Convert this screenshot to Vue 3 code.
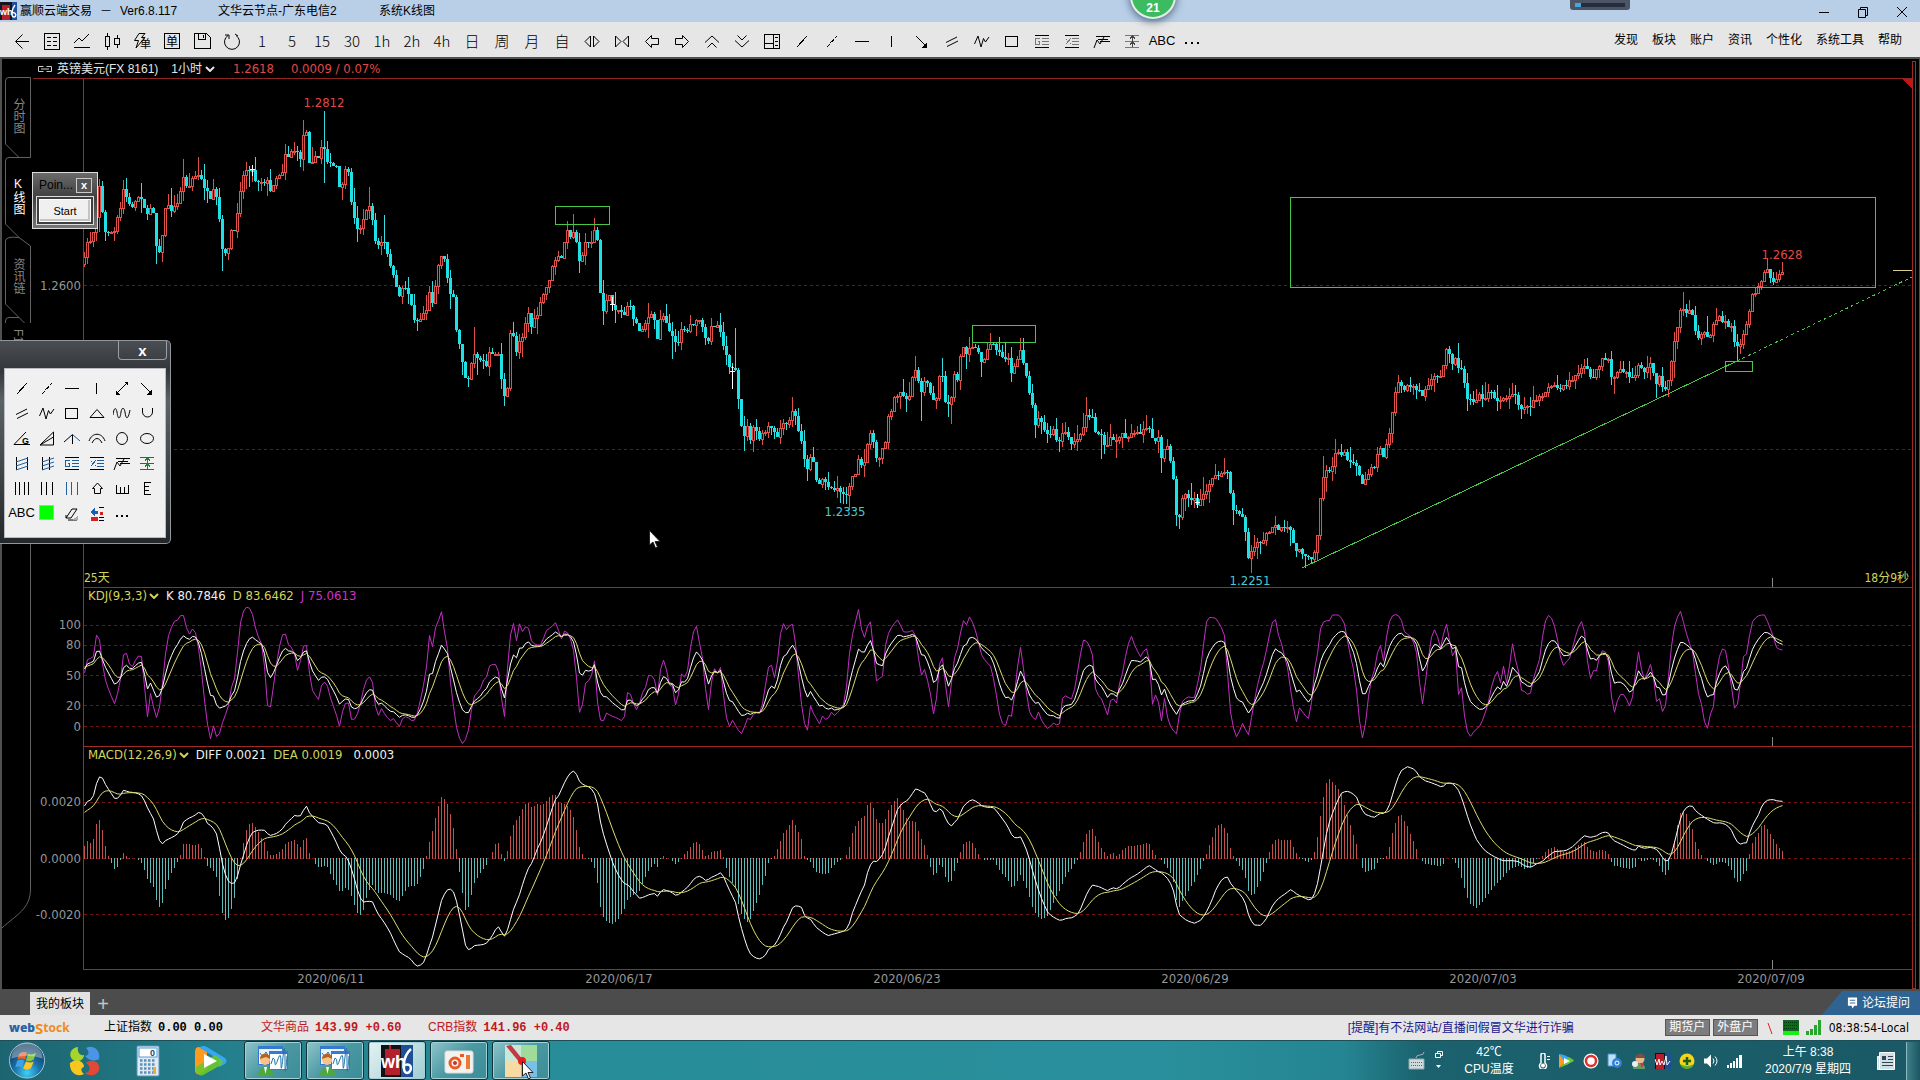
<script setup>
// ---------- sample data ----------
// Samples sit on a grid of 2.45 units per pixel column and 3 per pixel row.
const STEP = 3
const FIRST = 84.5
const COUNT = 567

function unpack(originX, originY, text, perX = 2.45) {
  return text.trim().split(/\s+/).map((pair) => {
    const [x, y] = pair.split(',').map(Number)
    return [originX + x / perX, originY + y / 3]
  })
}

function resample(points) {
  const out = []
  let k = 0
  for (let i = 0; i < COUNT; i++) {
    const x = FIRST + i * STEP
    while (k < points.length - 2 && points[k + 1][0] < x) k++
    const [x0, y0] = points[k]
    const [x1, y1] = points[k + 1]
    const t = Math.min(1, Math.max(0, (x - x0) / (x1 - x0 || 1)))
    out.push(y0 + (y1 - y0) * t)
  }
  return out
}

const priceTrack = [
  ...unpack(0, 80, `207,540 213,535 215,465 222,480 230,450 237,400 243,305 248,370 258,460 266,455 280,458 290,405 297,380 303,325 318,378 330,372 335,350 350,348 357,400 365,418 370,368 378,400 385,522 392,505 400,460 405,380 425,388 435,370 442,330 448,290 457,312 468,318 473,288 487,288 497,310 505,328 515,368 525,330 535,380 545,515 560,510 568,445 578,470 583,370 590,320 600,270 612,262 618,270 625,300 640,303 655,302 660,348 672,300 690,272 697,262 700,208 708,230 715,210 725,212 735,240 740,210 745,148 753,150 758,240 770,238 780,235 788,198 797,205 803,240 810,258 825,262 833,340 845,275 858,290 863,400 875,440 885,442 890,425 897,385 903,378 912,408 920,485 930,500 940,480 950,530 960,560 968,620 980,645 988,620 996,620 1003,650 1010,690 1018,725 1030,715 1045,685 1055,625 1062,680 1070,570 1080,535 1085,500 1092,570 1100,610 1105,645 1113,650 1118,755 1127,805 1135,855 1143,905 1150,880 1160,810 1168,830 1182,840 1192,860 1200,818 1208,830 1216,810 1225,830 1230,915 1237,958 1243,940 1250,760 1260,765 1268,840 1275,745 1283,780 1290,695 1297,700 1305,758 1312,705 1320,700 1327,655 1340,620 1350,580 1357,550 1365,525 1370,540 1380,535 1385,450 1397,465 1410,455 1415,500 1423,560 1432,500 1438,470 1447,495 1455,452 1463,455 1467,565 1474,695 1482,690 1488,635 1495,660 1505,680 1520,695 1530,700 1540,665 1548,700 1560,735`),
  ...unpack(600, 180, `97,450 103,440 113,425 122,405 135,420 141,480 150,392 158,410 168,440 178,470 187,500 197,462 202,425 212,470 220,425 235,433 243,415 250,445 260,485 268,488 273,432 287,435 297,450 303,500 313,525 320,575 330,565 335,600 341,690 347,745 355,765 362,740 370,780 378,740 390,775 400,765 415,740 425,755 432,780 442,745 455,730 462,745 468,690 475,690 485,750 492,780 498,770 502,850 510,880 518,800 525,860 532,910 540,912 548,888 557,925 567,915 577,935 585,918 595,945 605,943 612,905 622,890 635,840 645,868 652,840 658,760 665,745 672,805 680,860 690,800 698,795 703,735 708,695 716,698 722,650 735,632 745,655 758,645 765,600 773,565 780,600 788,630 796,598 805,625 815,645 820,695 828,632 833,570 840,600 848,690 858,670 862,640 870,570 877,605 885,510 893,492 900,525 907,485 915,500 925,515 935,540 945,525 955,495 965,488 972,505 982,530 995,535 1003,530 1009,590 1020,550 1030,510 1036,510 1040,595 1047,575 1053,645 1060,680 1068,735 1078,690 1085,745 1097,765 1113,752 1120,785 1127,785 1135,750 1143,770 1155,790 1165,775 1178,768 1183,740 1190,705 1200,710 1210,708 1215,770 1225,755 1232,790 1243,802 1252,762 1262,790 1270,780 1277,745 1287,775 1300,758 1315,762 1325,765 1335,745 1350,740 1357,795 1367,770 1377,840 1388,780 1396,840 1403,880 1409,915 1413,1020 1420,1005 1430,935 1440,955 1452,960 1463,970 1475,955 1487,925 1500,890 1515,890 1527,870 1535,862 1542,910 1547,980 1560,990`),
  ...unpack(1240, 180, `0,1012 8,1005 13,1055 20,1140 27,1115 37,1095 47,1090 58,1070 68,1055 77,1030 88,1055 100,1045 112,1050 120,1055 128,1122 138,1098 150,1135 162,1140 172,1110 180,1052 187,920 195,880 203,860 210,880 218,830 228,815 240,818 250,850 262,840 270,855 278,900 287,912 295,880 303,858 310,860 317,820 325,795 333,838 340,775 348,745 353,670 360,625 370,608 380,632 388,618 400,622 412,620 416,650 425,640 437,605 450,595 465,590 470,550 477,505 485,515 492,555 500,520 507,590 515,550 520,650 535,660 550,650 565,648 578,640 590,655 610,658 625,648 632,620 638,660 650,680 660,685 675,670 685,650 700,640 715,620 740,628 755,615 765,600 780,575 797,555 807,600 820,575 833,540 850,545 858,610 868,580 882,572 900,592 915,585 921,535 930,580 940,565 948,550 960,605 970,590 976,640 985,620 992,570 997,520 1003,470 1010,430 1017,375 1027,410 1040,395 1047,430 1052,470 1062,468 1070,455 1082,465 1090,440 1100,415 1115,420 1128,435 1137,450 1143,500 1153,500 1160,470 1165,420 1172,455 1177,345 1183,330 1190,340 1197,310 1205,290 1212,262 1220,280 1228,300 1238,300 1245,285 1252,270`, 2.306),
]

const jTrack = [
  ...unpack(0, 570, `205,322 213,270 222,265 230,258 237,190 244,210 252,290 260,340 270,370 280,403 293,350 303,250 310,250 315,280 325,290 335,262 346,252 352,320 361,445 368,367 376,410 384,445 395,390 402,280 412,200 425,155 436,150 443,135 450,137 456,170 463,195 471,176 480,190 490,260 500,380 508,460 516,508 523,467 530,500 538,490 548,445 558,420 568,345 577,320 583,230 590,150 598,118 605,110 612,115 618,130 625,170 633,200 642,225 650,310 656,418 663,410 672,330 680,260 690,195 700,192 707,225 720,240 729,302 735,280 742,232 750,215 757,300 765,360 780,390 788,345 796,335 803,350 812,395 822,425 832,470 840,420 848,395 855,400 861,448 870,447 880,420 890,360 898,330 905,320 912,330 918,400 926,440 935,415 945,438 957,452 965,445 978,472 988,440 998,440 1007,452 1016,450 1025,420 1037,350 1045,290 1052,195 1059,235 1068,165 1075,150 1082,124 1088,180 1096,230 1103,330 1110,400 1118,470 1127,510 1134,522 1142,505 1150,470 1157,400 1165,368 1175,365 1183,330 1190,330 1200,285 1213,282 1220,290 1228,380 1236,440 1243,300 1250,200 1257,152 1265,215 1273,160 1280,185 1290,165 1297,180 1303,218 1315,225 1327,225 1335,190 1342,175 1350,175 1360,155 1368,180 1376,208 1384,180 1395,195 1405,240 1413,330 1420,430 1428,400 1435,335 1447,330 1457,270 1462,380 1470,450 1480,452 1487,425 1495,437 1510,443 1523,452 1530,440 1538,362 1546,375 1553,405 1560,420 1567,400`),
  ...unpack(640, 570, `1,390 8,360 15,350 22,310 35,325 42,385 50,300 57,268 65,300 72,345 80,350 87,405 95,370 103,300 110,325 117,300 125,220 132,180 139,168 146,220 154,270 160,350 167,430 173,350 182,295 190,310 197,290 204,370 211,440 219,470 227,450 240,480 250,492 263,445 270,450 280,428 293,430 303,390 312,300 320,275 330,325 340,250 345,180 352,160 360,182 368,163 375,163 382,230 390,340 400,450 410,485 417,405 425,430 440,462 448,435 458,455 468,425 477,437 490,420 500,400 507,340 514,240 522,185 530,145 536,115 543,180 551,205 558,165 565,155 572,240 580,340 587,325 594,320 602,220 610,185 620,165 632,148 645,185 657,187 670,180 678,210 685,300 691,320 698,295 706,340 713,380 720,440 727,380 733,285 741,262 748,340 756,412 763,340 770,265 778,235 785,190 793,150 800,165 807,140 818,165 828,210 838,260 850,278 860,290 870,350 880,430 888,460 896,468 904,430 911,440 918,370 925,290 932,230 940,300 947,370 955,430 968,452 976,425 985,455 1000,478 1012,458 1027,470 1035,385 1045,375 1055,392 1063,370 1070,320 1078,260 1086,210 1096,215 1108,245 1114,350 1122,375 1133,390 1145,437 1153,390 1160,387 1168,400 1175,340 1184,300 1192,240 1203,195 1213,230 1227,262 1235,240 1243,235 1249,280 1256,410 1263,375 1270,395 1278,455 1285,385 1292,440 1300,470 1314,495 1322,430 1330,390 1345,380 1358,385 1366,340 1373,300 1380,230 1388,155 1396,141 1410,145 1422,165 1433,200 1440,320 1447,430 1455,480 1462,502 1470,480 1476,460 1484,480 1490,500 1500,430 1510,360 1520,310 1530,270 1538,220 1548,160 1556,142 1563,190 1567,208`),
  ...unpack(1280, 570, `5,225 12,265 20,300 28,380 40,458 48,412 60,435 70,445 77,400 83,310 92,250 98,180 107,155 115,152 120,155 127,135 145,135 157,155 165,210 173,260 185,325 193,440 203,510 212,440 220,340 230,310 240,240 247,225 254,275 262,190 270,145 280,132 295,140 305,185 320,200 333,230 341,330 349,403 357,330 365,250 372,195 378,178 386,200 393,235 401,190 408,163 416,215 423,260 430,240 437,375 444,345 450,420 457,480 466,500 478,480 490,468 500,440 510,400 520,340 532,300 540,340 547,285 556,345 562,290 570,218 577,270 584,300 590,360 600,365 612,380 620,330 630,290 638,260 645,180 652,145 660,133 670,155 680,210 687,260 694,287 702,275 712,262 720,215 730,175 738,152 746,185 753,270 760,328 767,300 774,312 782,260 790,242 803,250 812,380 820,430 828,385 838,367 848,385 857,410 866,370 872,300 879,240 887,310 895,335 902,300 909,280 916,330 924,410 930,385 940,440 948,380 955,270 963,190 970,150 982,122 990,165 1000,210 1010,240 1018,310 1025,370 1033,405 1040,455 1047,477 1055,430 1062,410 1070,300 1080,240 1090,232 1098,285 1105,340 1113,415 1120,410 1128,340 1135,260 1145,250 1153,170 1160,148 1175,135 1188,135 1198,165 1210,205 1217,235 1229,240`),
]

const diffTrack = [
  ...unpack(0, 570, `205,712 213,695 222,690 230,675 237,638 244,620 252,625 260,648 270,665 280,685 290,685 303,660 315,666 330,668 340,672 350,680 358,705 366,725 375,742 383,780 390,810 397,823 405,812 420,803 432,795 440,785 450,755 462,745 475,738 487,727 497,732 508,760 520,770 532,795 540,850 548,900 558,932 570,943 578,935 588,890 598,850 608,810 620,785 635,780 648,781 660,797 675,792 690,780 700,762 712,748 722,736 735,740 743,722 750,706 758,728 770,745 780,758 795,762 803,768 815,795 825,820 835,848 850,862 858,885 868,925 878,970 888,997 900,994 912,994 925,1030 940,1055 955,1085 968,1120 978,1145 990,1155 1005,1165 1015,1182 1025,1190 1040,1175 1050,1135 1060,1100 1070,1050 1082,990 1092,965 1100,955 1110,962 1120,1000 1130,1060 1140,1125 1150,1143 1160,1127 1175,1125 1190,1122 1205,1100 1213,1080 1221,1070 1228,1085 1238,1102 1248,1060 1260,1010 1270,985 1280,945 1292,900 1305,875 1315,840 1327,810 1340,765 1350,725 1360,690 1370,675 1380,645 1390,622 1402,602 1410,605 1418,632 1430,645 1445,652 1455,665 1463,695 1470,750 1480,800 1492,845 1503,885 1515,915 1528,940 1540,945 1550,962 1560,975 1567,985`),
  ...unpack(640, 570, `8,982 20,975 35,970 42,980 55,958 75,965 90,978 103,965 118,950 130,930 142,918 150,920 162,933 175,922 188,915 197,908 205,920 215,950 225,975 235,1000 243,1050 252,1090 262,1130 272,1155 290,1168 305,1160 315,1138 330,1125 340,1105 352,1070 362,1050 372,1015 382,1007 395,1010 405,1042 418,1048 430,1070 445,1085 460,1097 475,1092 490,1087 503,1082 512,1065 520,1030 530,1000 540,970 550,945 560,895 570,873 580,875 592,860 602,830 610,795 620,760 630,720 642,700 655,692 665,675 676,655 690,665 700,670 712,705 722,730 735,715 743,725 752,757 763,768 772,755 780,745 790,712 800,700 812,688 825,695 838,708 850,712 865,712 875,725 887,745 900,767 912,798 920,805 932,800 942,825 950,850 960,895 972,945 985,990 1000,1030 1015,1043 1030,1052 1045,1045 1060,1043 1075,1030 1085,1000 1097,965 1108,945 1125,950 1145,962 1158,953 1170,957 1185,940 1200,925 1215,915 1230,902 1247,886 1258,895 1270,905 1280,910 1292,925 1305,950 1313,1000 1322,1035 1340,1052 1358,1060 1375,1050 1388,1025 1400,995 1412,955 1425,930 1438,918 1447,940 1460,960 1475,980 1485,1005 1493,1045 1505,1065 1522,1066 1535,1045 1548,1010 1560,990 1567,983`),
  ...unpack(1280, 570, `12,972 27,958 38,970 50,978 62,985 75,992 85,970 92,940 98,900 104,860 112,800 120,760 130,725 140,695 150,670 162,663 175,668 187,680 197,710 207,732 220,738 230,743 245,730 258,730 268,705 278,665 288,625 297,602 312,590 330,598 342,620 355,632 370,638 385,645 397,652 410,638 425,642 437,660 447,690 457,730 468,770 482,810 500,840 520,857 545,872 570,872 585,875 600,888 615,892 628,882 642,875 657,858 672,845 700,842 715,832 730,815 745,797 760,802 775,798 788,788 803,786 815,810 835,822 855,835 870,842 878,828 890,835 910,832 925,840 937,862 948,878 957,860 965,825 972,790 980,750 990,720 1000,708 1010,708 1020,725 1035,738 1050,750 1065,760 1080,758 1095,765 1105,778 1113,800 1125,825 1133,818 1142,822 1150,790 1160,760 1172,735 1180,710 1190,692 1207,688 1215,692 1229,694`),
]

// ---------- candles ----------
const spikes = [
  [198, 157], [303, 120], [325, 111], [324, 183], [222, 271], [157, 264], [369, 187], [385, 215], [474, 327], [505, 406],
  [573, 214], [594, 218], [603, 325], [735, 328], [744, 449], [921, 421], [951, 424], [942, 358], [990, 333], [1021, 338],
  [1035, 438], [1086, 397], [1101, 459], [1176, 522], [1224, 458], [1251, 573], [1305, 568], [1323, 456], [1458, 343],
  [1499, 415], [1522, 419], [1683, 292], [1737, 361], [1782, 262], [843, 504], [846, 504], [650, 296], [672, 359],
]

function buildCandles() {
  const close = resample(priceTrack)
  let seed = 7
  const rand = () => ((seed = (seed * 16807) % 2147483647) / 2147483647)
  let red = ''
  let cyan = ''
  let bodies = ''
  let prev = close[0] + 4
  close.forEach((base, i) => {
    const x = FIRST + i * STEP
    const end = base + (rand() - 0.5) * 6
    const px = x - 84
    let top = Math.min(prev, end)
    let bottom = Math.max(prev, end)
    let high = top - rand() * rand() * 18
    let low = bottom + rand() * rand() * 18
    for (const [sx, sy] of spikes) {
      if (Math.abs(sx - x) < 1.5) {
        high = Math.min(high, sy)
        low = Math.max(low, sy)
      }
    }
    const r = (v) => Math.round(v - 79)
    if (end < prev) {
      red += `M${px} ${r(high)}V${r(top)}M${px} ${r(bottom)}V${r(low)}`
      red += `M${px - 1} ${r(top) + 0.5}h2V${Math.max(r(bottom), r(top) + 1) + 0.5}h-2Z`
    } else {
      cyan += `M${px} ${r(high)}V${r(low)}`
      bodies += `M${px - 1.5} ${r(top)}h3V${Math.max(r(bottom), r(top) + 1)}h-3Z`
    }
    prev = end
  })
  return { red, cyan, bodies }
}
const candles = buildCandles()

// ---------- indicators ----------
const toPath = (values, top) => 'M' + values.map((v, i) => `${FIRST + i * STEP - 84} ${(v - top).toFixed(1)}`).join('L')

const jValues = resample(jTrack)
const dValues = []
const kValues = []
let d = 666
for (const j of jValues) {
  d = (6 * d + j) / 7
  dValues.push(d)
  kValues.push((j + 2 * d) / 3)
}
const kdjPaths = { j: toPath(jValues, 588), k: toPath(kValues, 588), d: toPath(dValues, 588) }

const diffValues = resample(diffTrack)
let dea = 814
const deaValues = diffValues.map((v) => (dea += (v - dea) * 0.2))
let up = ''
let down = ''
diffValues.forEach((v, i) => {
  const h = Math.round((deaValues[i] - v) * 2)
  const x = FIRST + i * STEP - 84
  if (h > 0) up += `M${x} 112V${112 - h}`
  else if (h < 0) down += `M${x} 111V${111 - h}`
})
const macdPaths = { diff: toPath(diffValues, 747), dea: toPath(deaValues, 747), up, down }

const kdjLevels = [
  { text: '100', y: 37 }, { text: '80', y: 57 }, { text: '50', y: 87 }, { text: '20', y: 117 }, { text: '0', y: 138 },
]
const macdLevels = [{ text: '0.0020', y: 55 }, { text: '0.0000', y: 111 }, { text: '-0.0020', y: 167 }]
const dates = ['2020/06/11', '2020/06/17', '2020/06/23', '2020/06/29', '2020/07/03', '2020/07/09']
  .map((text, i) => ({ text, x: 248 + i * 288 }))
const marks = [
  { text: '1.2812', x: 240, y: 24, tone: 'rise' },
  { text: '1.2335', x: 761, y: 433, tone: 'fall' },
  { text: '1.2251', x: 1166, y: 502, tone: 'fall' },
  { text: '1.2628', x: 1698, y: 176, tone: 'rise' },
]
const pct = (v, total) => (v / total) * 100 + '%'

// ---------- icons: lists of [path, class] on an 18 x 18 grid ----------
const shapes = {
  back: [['M3 9.5H16M9.5 2.5L2.5 9.5L9.5 16.5', 'smooth']],
  list: [['M1.5 1.5H16.5V17.5H1.5ZM4 5.5h4M10 5.5h4M4 9.5h4M10 9.5h4M4 13.5h4M10 13.5h4']],
  trend: [['M1 11L6 6L9 9L16 2', 'smooth'], ['M1 15.5H17']],
  candle: [['M2.5 4.5h4v10h-4zM4.5 1v3M4.5 15v3M11.5 6.5h5v6h-5zM14.5 3v3M14.5 13v3']],
  save: [['M1.5 1.5H13.5L17.5 5.5V16.5H1.5ZM5.5 2V7.5H12.5V2M10.5 3v3']],
  reload: [['M5 3.5A7.5 7.5 0 1 0 13 3.5M2 3H6V7M15 4l-3-2', 'smooth']],
  widen: [['M7.5 4L2 9.5L7.5 15ZM10.5 4L16 9.5L10.5 15Z', 'smooth']],
  narrow: [['M2.5 4L8 9.5L2.5 15ZM15.5 4L10 9.5L15.5 15Z', 'smooth']],
  left: [['M8.5 3.5L2.5 9.5L8.5 15.5V12.5H15.5V6.5H8.5Z', 'smooth']],
  right: [['M9.5 3.5L15.5 9.5L9.5 15.5V12.5H2.5V6.5H9.5Z', 'smooth']],
  upup: [['M2 10.5L9 4L16 10.5M4.5 15.5L9 11L13.5 15.5', 'smooth']],
  downdown: [['M2 8.5L9 15L16 8.5M4.5 3.5L9 8L13.5 3.5', 'smooth']],
  layout: [['M1.5 2.5H16.5V16.5H1.5ZM10.5 2.5V16.5M1.5 11.5H10.5M12 5.5h3M12 9.5h3M12 13.5h3']],
  line: [['M4 15L14 4']],
  ray: [['M4 15L14 4', 'dash']],
  hline: [['M2 9.5H16']],
  vline: [['M8.5 4V15']],
  both: [['M4 14L14 4'], ['M3 15.5v-4l4 4zM15 3v4l-4-4z', 'solid']],
  arrow: [['M3 4L13 14'], ['M14 15.5v-5l-5 5z', 'solid']],
  pair: [['M3 10.5L14 5M4 14.500L15 9', 'smooth']],
  wave: [['M1.5 12L5 4L8 15L10.5 6.5L12.5 10L16 5', 'smooth']],
  rect: [['M2.5 4.5H14.5V14.5H2.5Z']],
  tri: [['M2 13.5L9 5.5L16 13.5Z', 'smooth']],
  sine: [['M0 11C1 3 3 3 4 8C5 16 7 16 8 8C9 3 11 3 12 8C13 16 15 16 17 6', 'smooth']],
  cup: [['M4.5 4V8A5 5 0 0 0 14.5 8V4', 'smooth']],
  gann: [['M1 15.5L13 3M1 15.5H17', 'smooth']],
  fan: [['M2 16L15.5 3V16ZM2 16L15.5 8', 'smooth']],
  fork: [['M1 13L9.5 5.5V15', 'smooth'], ['M9.5 5.5L17 12', 'smooth blue']],
  arcs: [['M1 12C4 3 14 3 17 12M4 14C7 8 11 8 14 14', 'smooth']],
  circle: [['M3.5 9.5A5.5 6 0 1 1 14.5 9.5A5.5 6 0 1 1 3.5 9.5', 'smooth']],
  ellipse: [['M2.5 9.5A6.5 5 0 1 1 15.5 9.5A6.5 5 0 1 1 2.5 9.5', 'smooth']],
  chanA: [['M3.5 3V16M14.5 3V16'], ['M3 8L15 4M3 12L15 8M3 16L15 12', 'smooth blue']],
  chanB: [['M4.5 3V16M11.5 3V16'], ['M4 8L16 4M4 12L16 8M4 16L16 12', 'smooth blue']],
  golden: [['M2 3.5H16M2 15.5H16'], ['M9 6.5h7M9 9.5h7M9 12.5h7M7 6.5H2.5V12.5H6.5V9.5H5', 'tint']],
  percent: [['M2 3.5H16M2 15.5H16'], ['M9 6.5h7M9 9.5h7M9 12.5h7M3 12L8 6M3 7h1M7 11h1', 'tint']],
  speed: [['M3 4.5H17M5 7.5H15M7 9.5H17'], ['M1 16L4 8L7 12L11 5', 'smooth']],
  span: [['M2 3.5H16M2 9.5H16M2 15.5H16', 'tint'], ['M9.5 4V15M7 6.5L9.5 4L12 6.5M7 12.5L9.5 10L12 12.5', 'green']],
  bars4: [['M2.5 3V16M6.5 3V16M11.5 3V16M15.5 3V16']],
  bars3: [['M3.5 3V16M8.5 3V16M14.5 3V16']],
  bars3b: [['M3.5 3V16M8.5 3V16M14.5 3V16', 'blue']],
  upArrow: [['M9.5 4L14.5 9.5H12.5V14.5H6.5V9.5H4.5Z', 'smooth']],
  comb: [['M3.5 6V14.5H15.5V6M7.5 8V14M11.5 8V14']],
  ruler: [['M13 3.5H6.5V15.5H13M7 7.5H11M7 11.5H11']],
  erase: [['M3 14L9 5H14L8 14ZM3 14V11M5 16H14', 'smooth'], ['M9 16h6v-4z', 'shade']],
  remove: [['M2 8l5-4v3h3v3H7v3z', 'bluefill'], ['M3 13h7v4H3zM12 8h3v3h-3z', 'redfill'], ['M11 3.5h5M11 13.5h5M11 16.5h5']],
}
const toolbar = [
  { icon: 'back', name: '返回' }, { icon: 'list', name: '报价' }, { icon: 'trend', name: '分时' }, { icon: 'candle', name: 'K线' },
  { flash: true, name: '闪单' }, { boxed: '单', name: '下单' }, { icon: 'save', name: '保存' }, { icon: 'reload', name: '刷新' },
  { text: '1' }, { text: '5' }, { text: '15' }, { text: '30' }, { text: '1h' }, { text: '2h' }, { text: '4h' },
  { text: '日' }, { text: '周' }, { text: '月' }, { text: '自' },
  { icon: 'widen', name: '放大' }, { icon: 'narrow', name: '缩小' }, { icon: 'left', name: '左移' }, { icon: 'right', name: '右移' },
  { icon: 'upup', name: '上一合约' }, { icon: 'downdown', name: '下一合约' }, { icon: 'layout', name: '布局' },
  { icon: 'line', name: '线段' }, { icon: 'ray', name: '射线' }, { icon: 'hline', name: '水平线' }, { icon: 'vline', name: '垂直线' },
  { icon: 'arrow', name: '箭头' }, { icon: 'pair', name: '平行线' }, { icon: 'wave', name: '波浪线' }, { icon: 'rect', name: '矩形' },
  { icon: 'golden', name: '黄金分割' }, { icon: 'percent', name: '百分比' }, { icon: 'speed', name: '速阻线' }, { icon: 'span', name: '量度' },
  { small: 'ABC' }, { dots: true, name: '更多' },
]
const palette = [
  'line', 'ray', 'hline', 'vline', 'both', 'arrow',
  'pair', 'wave', 'rect', 'tri', 'sine', 'cup',
  'gann', 'fan', 'fork', 'arcs', 'circle', 'ellipse',
  'chanA', 'chanB', 'golden', 'percent', 'speed', 'span',
  'bars4', 'bars3', 'bars3b', 'upArrow', 'comb', 'ruler',
  'ABC', 'swatch', 'erase', 'remove', 'dots',
]
const menu = ['发现', '板块', '账户', '资讯', '个性化', '系统工具', '帮助']
</script>

<template>
  <div class="app">
    <header class="titlebar">
      <svg class="logo" viewBox="0 0 17 18" aria-hidden="true">
        <rect width="17" height="18" fill="#15151d" /><rect x="2" y="3" width="8" height="15" fill="#b51f2b" />
        <rect x="12" width="5" height="18" fill="#1c4f96" />
        <text x="0" y="13" font-size="9" font-weight="700" fill="#fff">wh</text>
        <path d="M15 3C11 8 11 15 14 15S16 9 12 11" fill="none" stroke="#fff" stroke-width="1.4" />
      </svg>
      <span class="t1">赢顺云端交易</span><span class="t2">－</span><span class="t3">Ver6.8.117</span>
      <span class="t4">文华云节点-广东电信2</span><span>系统K线图</span>
      <div class="winctl">
        <button aria-label="最小化"><svg viewBox="0 0 12 12"><path d="M1 6.5H11" /></svg></button>
        <button aria-label="还原"><svg viewBox="0 0 12 12"><path d="M1.5 3.5H8.5V11.5H1.5ZM3.5 3V1.5H10.5V9.5H9" /></svg></button>
        <button aria-label="关闭"><svg viewBox="0 0 12 12"><path d="M1 1L11 11M11 1L1 11" /></svg></button>
      </div>
      <span class="badge">21</span>
      <span class="recorder"><i></i></span>
    </header>

    <nav class="toolbar">
      <div class="tools">
        <button v-for="(t, i) in toolbar" :key="i" :aria-label="t.name || t.text || t.small" :class="{ small: t.small }">
          <svg v-if="t.icon" class="ico grey" viewBox="0 0 18 18">
            <path v-for="(p, k) in shapes[t.icon]" :key="k" :d="p[0]" :class="p[1]" />
          </svg>
          <svg v-else-if="t.flash" class="ico" viewBox="0 0 18 18">
            <path class="smooth" d="M6 1.5H12L8.5 5.5H12L3 16L5.5 8.5H1.5Z" />
            <text x="7" y="16" class="glyph">单</text>
          </svg>
          <svg v-else-if="t.boxed" class="ico" viewBox="0 0 18 18">
            <path d="M1.5 1.5H16.5V16.5H1.5Z" /><text x="3" y="14" class="glyph g12">{{ t.boxed }}</text>
          </svg>
          <svg v-else-if="t.dots" class="ico" viewBox="0 0 18 18"><path class="solid" d="M2 10h2v2H2zM8 10h2v2H8zM14 10h2v2h-2z" /></svg>
          <template v-else>{{ t.text || t.small }}</template>
        </button>
      </div>
      <div class="menu"><a v-for="m in menu" :key="m" href="#">{{ m }}</a></div>
    </nav>

    <main class="work">
      <aside class="rail">
        <svg class="railTop" viewBox="0 0 29 264" aria-hidden="true">
          <path d="M28.5 18.5H7Q3.500 18.5 3.500 22V85L17 98.500H28.5V18.5M17 98.500H7Q3.500 98.500 3.500 102V165L17 178.500Q3.500 177 3.500 182V245L28.500 270M17 178.500L28.500 187V264M17 258.500H7Q3.500 258.500 3.500 262V264" />
        </svg>
        <button class="tab">分时图</button>
        <button class="tab on">K线图</button>
        <button class="tab">资讯链</button>
        <button class="tab last">F10</button>
        <div class="railLine"></div>
        <svg class="railEnd" viewBox="0 0 29 40" aria-hidden="true"><path d="M28.5 0C28.500 20 14 26 0 39" /></svg>
      </aside>

      <section class="charts">
        <div class="symbol">
          <svg class="link" viewBox="0 0 16 8"><path d="M6.500 1.500H1.500V6.500H6.500M9.500 1.500H14.500V6.500H9.500M4 4H12" /></svg>
          <span>英镑美元(FX 8161)</span>
          <button class="period">1小时<svg class="chev" viewBox="0 0 10 6"><path d="M1 1L5 5L9 1" /></svg></button>
          <span class="num rise last-price">1.2618</span>
          <span class="num rise">0.0009 / 0.07%</span>
        </div>

        <div class="panel price">
          <div class="gutter num"><span :style="{ top: pct(207, 508) }">1.2600</span></div>
          <div class="plot">
            <svg viewBox="0 0 1828 508" preserveAspectRatio="none">
              <path class="grid" d="M0 206.500H1828M0 370.500H1828" />
              <path class="c-red" :d="candles.red" />
              <path class="c-cyan" :d="candles.cyan" />
              <path class="c-body" :d="candles.bodies" />
              <path class="c-white" d="M168.500 86V97M166 90.500H171M528.500 218V232M526 225.500H531M648.500 287V310M646 292.500H651M1113.500 415V429M1111 423.500H1116" />
              <path class="draw" d="M471.500 127.500H525.500V145.500H471.500ZM888.500 246.500H951.500V263.500H888.500ZM1206.500 118.500H1791.500V208.500H1206.500ZM1641.500 282.500H1668.500V292.500H1641.500ZM1218 489L1653 282" />
              <path class="draw dots" d="M1653 282L1828 198" />
              <path class="now" d="M1809 191.500H1828" />
              <path class="tick" d="M1688.500 499V508" />
              <path class="flag" d="M1818 0H1828V10Z" />
            </svg>
            <span v-for="m in marks" :key="m.text" class="mark num" :class="m.tone" :style="{ left: pct(m.x, 1828), top: pct(m.y, 508) }">{{ m.text }}</span>
            <span class="corner num">25天</span>
            <span class="corner end num">18分9秒</span>
          </div>
        </div>

        <div class="panel">
          <div class="gutter num"><span v-for="l in kdjLevels" :key="l.text" :style="{ top: pct(l.y + 1, 158) }">{{ l.text }}</span></div>
          <div class="plot ruled">
            <svg viewBox="0 0 1828 158" preserveAspectRatio="none">
              <path v-for="l in kdjLevels" :key="l.y" class="grid" :d="`M0 ${l.y + 0.5}H1828`" />
              <path class="l-j" :d="kdjPaths.j" />
              <path class="l-k" :d="kdjPaths.k" />
              <path class="l-d" :d="kdjPaths.d" />
              <path class="tick" d="M1688.500 149V158" />
            </svg>
            <div class="legend num">
              <button class="y">KDJ(9,3,3)<svg class="chev" viewBox="0 0 10 6"><path d="M1 1L5 5L9 1" /></svg></button>
              <span class="w">K 80.7846</span><span class="y">D 83.6462</span><span class="m">J 75.0613</span>
            </div>
          </div>
        </div>

        <div class="panel">
          <div class="gutter num"><span v-for="l in macdLevels" :key="l.text" :style="{ top: pct(l.y + 1, 222) }">{{ l.text }}</span></div>
          <div class="plot ruled">
            <svg viewBox="0 0 1828 222" preserveAspectRatio="none">
              <path v-for="l in macdLevels" :key="l.y" class="grid" :d="`M0 ${l.y + 0.5}H1828`" />
              <path class="h-up" :d="macdPaths.up" />
              <path class="h-down" :d="macdPaths.down" />
              <path class="l-k" :d="macdPaths.diff" />
              <path class="l-d" :d="macdPaths.dea" />
              <path class="tick" d="M1688.500 213V222" />
            </svg>
            <div class="legend num">
              <button class="y">MACD(12,26,9)<svg class="chev" viewBox="0 0 10 6"><path d="M1 1L5 5L9 1" /></svg></button>
              <span class="w">DIFF 0.0021</span><span class="y">DEA 0.0019</span><span class="w hist">0.0003</span>
            </div>
          </div>
        </div>

        <div class="axis num">
          <span v-for="t in dates" :key="t.text" :style="{ left: pct(t.x, 1829) }">{{ t.text }}</span>
        </div>
      </section>
      <div class="scroll"></div>

      <section class="point" aria-label="Pointer">
        <div class="pointHead"><span>Poin...</span><button aria-label="关闭">x</button></div>
        <div class="pointBody"><button>Start</button></div>
      </section>

      <section class="palette" aria-label="画线工具">
        <div class="palHead"><button aria-label="关闭">x</button></div>
        <div class="palBody">
          <button v-for="p in palette" :key="p" :aria-label="p">
            <template v-if="p === 'ABC'">ABC</template>
            <i v-else-if="p === 'swatch'" class="swatch"></i>
            <svg v-else-if="p === 'dots'" class="ico" viewBox="0 0 18 18"><path class="solid" d="M3 11h2v2H3zM8 11h2v2H8zM13 11h2v2h-2z" /></svg>
            <svg v-else class="ico" viewBox="0 0 18 18">
              <path v-for="(s, k) in shapes[p]" :key="k" :d="s[0]" :class="s[1]" />
              <text v-if="p === 'gann'" x="9" y="15" class="g">G</text>
            </svg>
          </button>
        </div>
      </section>
    </main>

    <div class="sheets">
      <button class="sheet">我的板块</button><button class="add" aria-label="新增">+</button>
      <a class="forum" href="#">
        <svg viewBox="0 0 12 12"><path d="M1 0H11V9H8L6 12L5 9H1Z" fill="#fff" /><path d="M3 3H9M3 6H9" stroke="#2f6392" /></svg>论坛提问
      </a>
    </div>

    <div class="status">
      <span class="brand"><b>web</b><i>S</i><em>tock</em></span>
      <span class="quote q1">上证指数<b>0.00 0.00</b></span>
      <span class="quote q2 red">文华商品<b>143.99 +0.60</b></span>
      <span class="quote q3 red">CRB指数<b>141.96 +0.40</b></span>
      <a class="notice" href="#">[提醒]有不法网站/直播间假冒文华进行诈骗</a>
      <button class="acct">期货户</button><button class="acct">外盘户</button>
      <svg class="slash" viewBox="0 0 8 14"><path d="M2 2L6 13" stroke="#d22" /></svg>
      <svg class="chip" viewBox="0 0 16 15"><rect width="16" height="15" fill="#0f6a1c" /><path d="M1 2.500H15M1 5.500H15M1 8.500H15" stroke="#031" stroke-dasharray="1 1" /><rect y="11" width="16" height="4" fill="#14f014" /></svg>
      <svg class="signal" viewBox="0 0 16 15"><path d="M0 11h3v4H0zM4 9h3v6H4zM8 5h3v10H8zM12 0h3v15h-3z" fill="#27a52c" /></svg>
      <time class="time">08:38:54-Local</time>
    </div>

    <footer class="taskbar">
      <button class="pin orb" aria-label="开始">
        <svg viewBox="0 0 40 40">
          <defs><radialGradient id="orb" cx="50%" cy="85%" r="75%"><stop offset="0" stop-color="#3fd0f5" /><stop offset=".5" stop-color="#1a6fa8" /><stop offset="1" stop-color="#0d3a5c" /></radialGradient></defs>
          <circle cx="20" cy="20" r="18" fill="url(#orb)" stroke="#a8c8d8" />
          <path d="M12 13Q16 10 20 12L18 19Q14 17 10 19Z" fill="#f0632a" /><path d="M21 13Q25 15 29 12L27 19Q23 22 19 20Z" fill="#8cc63e" />
          <path d="M10 20Q14 18 17 20L15 28Q12 25 8 27Z" fill="#3fa2e6" /><path d="M19 21Q23 23 27 21L24 28Q20 31 16 28Z" fill="#fbc52c" />
          <path d="M4 18A16 16 0 0 1 36 18Q20 12 4 18Z" fill="#fff" opacity=".35" />
        </svg>
      </button>
      <button class="pin" aria-label="四叶草">
        <svg viewBox="0 0 32 32"><path d="M9 2C1 3-1 11 4 15C9 18 15 15 15 10C11 11 8 7 9 2Z" fill="#a6d52a" /><path d="M17 3C24-1 32 5 30 14C25 17 19 15 16 11C21 10 20 6 17 3Z" fill="#4b94e6" /><path d="M1 18C7 13 15 16 15 22C11 23 12 27 15 29C8 33 0 27 1 18Z" fill="#f8c61c" /><path d="M17 18C23 13 32 17 30 25C27 32 19 31 16 28C22 27 22 21 17 18Z" fill="#e04a35" /></svg>
      </button>
      <button class="pin" aria-label="计算器">
        <svg viewBox="0 0 32 32"><rect x="5" y="1" width="22" height="30" rx="1" fill="#dcebf6" stroke="#5f93b8" /><rect x="7" y="3" width="18" height="9" fill="#fff" stroke="#5a9bd0" /><text x="18" y="11" font-size="9" font-weight="700" fill="#264a6e">0</text><path d="M8 15.500H24M8 19.500H24M8 23.500H24M8 27.500H24" stroke="#5f8fb8" stroke-width="2.500" stroke-dasharray="2.500 1.500" /><rect x="21" y="22" width="3" height="7" fill="#f0a830" /></svg>
      </button>
      <button class="pin" aria-label="播放器">
        <svg viewBox="0 0 32 32"><path d="M4 2Q0 2 0 7V25Q0 30 5 29L12 24V6Z" fill="#ff9a1e" /><path d="M5 2Q8 0 12 2L30 13Q33 16 30 19L24 22L23 14L5 3Z" fill="#35a8f5" /><path d="M3 29Q0 26 1 22L20 10L27 15Q29 18 26 20L10 29Q6 32 3 29Z" fill="#69c92c" opacity=".9" /><path d="M9 9L22 16L9 23Z" fill="#fff" /></svg>
      </button>
      <div class="tasks">
        <button v-for="n in 2" :key="n" class="task" :aria-label="'行情助手' + n">
          <svg viewBox="0 0 32 32"><path d="M1 1H26V20H1Z" fill="#3679d0" /><path d="M2 4H25V19H2Z" fill="#eaf3fc" /><path d="M3 8L6 12L9 7L12 12" fill="none" stroke="#27a" /><path d="M12 6H31V25H12Z" fill="#3679d0" /><path d="M13 9H30V24H13Z" fill="#fff" /><path d="M14 19L16 13Q18 13 18 18T21 14T24 18T26 12T28 16T30 11" fill="none" stroke="#27a" /><path d="M1 30C1 20 16 20 16 30Z" fill="#4fa83c" /><circle cx="8" cy="15" r="5" fill="#f7c38c" /><path d="M3 14C3 7 13 7 13 14L9 12Z" fill="#b8621c" /><path d="M7 22L8.500 29L10 22Z" fill="#fff" /></svg>
        </button>
        <button class="task on" aria-label="赢顺">
          <svg viewBox="0 0 32 32"><rect width="32" height="32" fill="#101016" /><rect x="20" width="12" height="32" fill="#1c4f96" /><rect x="4" y="4" width="15" height="26" fill="#b51f2b" /><path d="M9 0V5" stroke="#b51f2b" stroke-width="2" /><text x="0" y="23" font-size="18" font-weight="700" fill="#fff">wh</text><path d="M30 4C21 12 21 28 26 28C31 28 32 17 24 20" fill="none" stroke="#fff" stroke-width="2.500" /></svg>
        </button>
        <button class="task" aria-label="录像">
          <svg viewBox="0 0 32 32"><rect x="2" y="6" width="28" height="22" rx="2" fill="#f4f1ee" stroke="#ddd" /><circle cx="12" cy="18" r="5" fill="none" stroke="#ea5a24" stroke-width="3" /><circle cx="12" cy="18" r="2" fill="#b33" /><path d="M17 9h4v3h-4z" fill="#ea5a24" /><rect x="23" y="10" width="4" height="14" fill="#ea7a34" /></svg>
        </button>
        <button class="task" aria-label="指针">
          <svg viewBox="0 0 32 32"><rect width="16" height="16" fill="#c9e8d8" /><rect x="16" width="16" height="16" fill="#9fdc9c" /><rect y="16" width="16" height="16" fill="#f7dba4" /><rect x="16" y="16" width="16" height="16" fill="#79bfe8" /><path d="M1 1L6 0L18 15L15 18Z" fill="#c23a44" /><circle cx="17" cy="16" r="4" fill="#e81c1c" /></svg>
        </button>
      </div>

      <div class="tray">
        <svg class="kbd" viewBox="0 0 36 22"><path d="M1 9h15v10H1z" fill="#cfdadd" stroke="#8aa" /><path d="M3 12.500H15M3 15.500H15" stroke="#567" stroke-dasharray="1 1" /><path d="M8 8Q8 5 12 5T16 2" fill="none" stroke="#aab" /><path d="M27.500 3.500h5v4h-5zM29.500 3V1.500h5v4h-2" fill="none" stroke="#fff" /><path d="M28 15h5l-2.500 3z" fill="#fff" /></svg>
        <div class="temp"><span>42℃</span><span>CPU温度</span></div>
        <div class="trayIcons">
          <svg viewBox="0 0 16 16"><path d="M6 2a2 2 0 0 1 4 0v8a3.500 3.500 0 1 1-4 0z" fill="none" stroke="#fff" stroke-width="1.500" /><circle cx="8" cy="12.500" r="2" fill="#fff" /><path d="M12 3.500h3M12 6.500h3" stroke="#fff" /></svg>
          <svg viewBox="0 0 16 16"><path d="M0 1L8 8L0 15Z" fill="#ff9a1e" /><path d="M0 1Q3 0 15 7L8 12Z" fill="#35a8f5" /><path d="M1 15L10 4L15 8Z" fill="#69c92c" /><path d="M5 5L11 8L5 11Z" fill="#fff" /></svg>
          <svg viewBox="0 0 16 16"><circle cx="8" cy="8" r="7.500" fill="#fff" /><circle cx="8" cy="8" r="5" fill="none" stroke="#e03030" stroke-width="2.500" /></svg>
          <svg viewBox="0 0 16 16"><path d="M1 1h8v12H1z" fill="#bfe0fa" stroke="#4a90d0" /><circle cx="10" cy="10" r="5" fill="#2f7fd6" /><circle cx="10" cy="10" r="2" fill="none" stroke="#fff" /></svg>
          <svg viewBox="0 0 16 16"><path d="M2 16C2 9 15 9 14 16Z" fill="#5f9c68" /><circle cx="9" cy="6" r="4.500" fill="#e8b890" /><path d="M4 5C5-1 14 0 14 5Z" fill="#7a5040" /><circle cx="4" cy="11" r="3" fill="#eee" /><path d="M9 10l2 5 2-5z" fill="#d33" /></svg>
          <svg viewBox="0 0 16 16"><rect width="16" height="16" fill="#101016" /><rect x="10" width="6" height="16" fill="#1c4f96" /><rect x="1" y="1" width="8" height="15" fill="#b51f2b" /><path d="M0 6l2 6 2-6 1 6 2-4 2 4 2-9 1 9 3-4" fill="none" stroke="#fff" /></svg>
          <svg viewBox="0 0 16 16"><circle cx="8" cy="8" r="7.500" fill="#f4d51c" /><path d="M1 11A7.500 7.500 0 0 0 15 11Q8 15 1 11Z" fill="#5cae2c" /><path d="M8 4v8M4 8h8" stroke="#1c5e20" stroke-width="2.500" /></svg>
          <svg viewBox="0 0 16 16"><path d="M1 5.500h3l4-4v13l-4-4H1z" fill="#fff" /><path d="M10 5.500q2 2.500 0 5M12 3.500q4 4.500 0 9" fill="none" stroke="#fff" /></svg>
          <svg viewBox="0 0 16 16"><path d="M0 12h2v3H0zM3 10h2v5H3zM6 8h2v7H6zM9 5h2v10H9zM12 2h3v13h-3z" fill="#fff" /></svg>
        </div>
        <div class="clock"><span>上午 8:38</span><span>2020/7/9 星期四</span></div>
        <svg class="note" viewBox="0 0 20 20"><path d="M3.500 1.500h15v17h-15zM3 5.500H1.500v13H4" fill="#cfe0e4" stroke="#fff" /><path d="M6 5h4v4H6z" fill="#345" /><path d="M12 5.500h5M12 8.500h5M6 11.500h11M6 14.500h11" stroke="#345" /></svg>
        <button class="peek" aria-label="显示桌面"></button>
      </div>
    </footer>

    <svg class="cursor c1" viewBox="0 0 12 19"><path d="M.5.5V15L4 12L6.500 18L8.500 17L6 11.500H11Z" /></svg>
    <svg class="cursor c2" viewBox="0 0 12 19"><path d="M.5.5V15L4 12L6.500 18L8.500 17L6 11.500H11Z" /></svg>
  </div>
</template>

<style>
body { margin: 0; background: #000; }
</style>

<style scoped>
.app {
  position: relative; display: flex; flex-direction: column; min-height: 100vh; overflow: hidden;
  font: 12px/16px "Liberation Sans", "Noto Sans CJK SC", sans-serif; color: #000;
}
button { margin: 0; padding: 0; border: 0; background: none; font: inherit; color: inherit; }
a { color: inherit; text-decoration: none; }
svg { display: block; fill: none; }
.num { font-family: "DejaVu Sans Condensed", "Noto Sans CJK SC", sans-serif; font-size: 13px; }

.titlebar { position: relative; display: flex; align-items: center; height: 22px; background: #b9cfe8; white-space: nowrap; }
.logo { width: 17px; height: 18px; margin-right: 3px; }
.t2 { margin: 0 8px; }
.t1 { width: 72px; }
.t3 { width: 98px; }
.t4 { width: 161px; }
.winctl { display: flex; gap: 27px; margin: 2px 12px 0 auto; }
.winctl svg { width: 12px; height: 12px; stroke: #000; }
.badge {
  position: absolute; left: 60%; top: -27px; z-index: 3; width: 42px; height: 42px; border: 2px solid #e4efe8; border-radius: 50%;
  transform: translateX(-22px); background: #3dbb60; color: #fff; font: 700 12px/66px "Liberation Sans", sans-serif; text-align: center;
  box-shadow: 0 2px 8px #4a5f7a;
}
.recorder { position: absolute; right: 290px; top: 0; width: 60px; height: 10px; border-radius: 0 0 3px 3px; background: #4c5465; }
.recorder i { position: absolute; left: 5px; top: 3px; width: 50px; height: 4px; background: linear-gradient(90deg, #3fa9e0 6px, #252d3d 6px); }

.toolbar { display: flex; align-items: center; justify-content: space-between; height: 35px; background: #e6e6e6; border-bottom: 2px solid #505050; }
.tools { display: flex; padding: 2px 0 0 7px; }
.tools button { display: flex; align-items: center; justify-content: center; width: 30px; height: 24px; font: 300 15px/24px "Noto Sans CJK SC", sans-serif; }
.tools .small, .palBody button { font: 13px/24px "Liberation Sans Narrow", "Liberation Sans", sans-serif; }
.menu { display: flex; gap: 14px; padding-right: 18px; }
.ico { width: 18px; height: 18px; }
.ico path { stroke: #000; shape-rendering: crispEdges; }
.ico .smooth { shape-rendering: auto; }
.ico .dash { stroke-dasharray: 4 1 1 1; }
.ico .solid { fill: #000; stroke: none; }
.ico .blue, .ico .tint { stroke: #1f5f9f; }
.ico .green { stroke: #138a2a; }
.ico .shade { fill: #aaa; stroke: none; }
.ico .bluefill { fill: #1c5fae; stroke: none; }
.ico .redfill { fill: #d81f1f; stroke: none; }
.grey .tint { stroke: #777; }
.grey .green { stroke: #444; }
.glyph { font: 11px "Noto Sans CJK SC", sans-serif; fill: #000; }
.g12 { font-size: 12px; }
.g { font: 700 9px "Liberation Sans", sans-serif; fill: #000; }

.work { position: relative; flex: 1; display: flex; min-height: 0; background: #000; border-left: 2px solid #505050; border-right: 1px solid #505050; }
.rail { position: relative; display: flex; flex-direction: column; width: 29px; padding-top: 18px; box-sizing: border-box; color: #858585; }
.railTop { position: absolute; left: 0; top: 0; width: 29px; height: 264px; }
.railTop path, .railEnd path { stroke: #626262; }
.tab { position: relative; height: 80px; width: 29px; font-size: 12px; line-height: 14px; writing-mode: vertical-rl; text-orientation: upright; padding: 0 6px 2px 9px; text-align: center; }
.tab.on { color: #fff; }
.tab.last { text-orientation: mixed; text-align: left; padding-top: 12px; }
.railLine { flex: 1; border-right: 1px solid #626262; }
.railEnd { width: 29px; height: 40px; margin-bottom: 60px; }

.charts { flex: 1; display: grid; grid-template-rows: 20px minmax(0, 508fr) minmax(0, 159fr) minmax(0, 223fr) 20px; min-width: 0; }
.symbol { display: flex; align-items: center; height: 19px; margin-left: 2px; border-bottom: 1px solid #8f2420; color: #e6e6e6; white-space: nowrap; }
.link { width: 16px; height: 8px; margin: 0 4px 0 4px; stroke: #ccc; }
.period { display: flex; align-items: center; gap: 3px; margin: 0 18px 0 13px; }
.chev { width: 10px; height: 6px; stroke: currentColor; stroke-width: 2; }
.last-price { margin-right: 17px; }
.rise { color: #e04848; }
.fall { color: #49c9cf; }
.panel { display: grid; grid-template-columns: 52px minmax(0, 1fr); min-height: 0; }
.gutter { position: relative; color: #969696; }
.gutter span { position: absolute; right: 2px; transform: translateY(-50%); white-space: nowrap; }
.plot { position: relative; border-left: 1px solid #a02a28; min-height: 0; }
.ruled { border-top: 1px solid #a02a28; }
.plot > svg { position: absolute; width: 100%; height: 100%; shape-rendering: crispEdges; overflow: hidden; }
.plot > svg path { vector-effect: non-scaling-stroke; }
.grid { stroke: #701414; stroke-dasharray: 3 3; }
.c-red { stroke: #e2504a; }
.c-cyan { stroke: #35dce0; }
.plot .c-body { fill: #1fe0e4; }
.c-white { stroke: #fff; }
.draw { stroke: #46c846; }
.dots { stroke-dasharray: 3 3; }
.now { stroke: #d6d08a; }
.tick { stroke: #8a8a8a; }
.plot .flag { fill: #c01810; }
.l-j { stroke: #c42fc4; }
.l-k { stroke: #fff; }
.l-d { stroke: #dede70; }
.l-j, .l-k, .l-d { shape-rendering: auto; }
.h-up { stroke: #c4504c; }
.h-down { stroke: #5cbcbc; }
.mark { position: absolute; transform: translate(-50%, -50%); line-height: 14px; }
.corner { position: absolute; left: 0; bottom: 2px; line-height: 14px; font-size: 12px; color: #d3d35c; }
.corner.end { left: auto; right: 3px; }
.legend { position: absolute; left: 4px; top: 0; display: flex; gap: 7px; white-space: nowrap; }
.legend button { display: flex; align-items: center; gap: 2px; }
.y { color: #d3d35c; }
.w { color: #f0f0f0; }
.m { color: #d030d0; }
.hist { margin-left: 4px; }
.axis { position: relative; margin-left: 52px; border-top: 1px solid #a02a28; color: #969696; }
.axis span { position: absolute; top: 1px; transform: translateX(-50%); }
.scroll { width: 2px; margin: 2px 3px 0 0; border: 1px solid #a02a28; }

.point { position: absolute; left: 30px; top: 113px; width: 64px; height: 55px; border: 1px solid #ddd; background: linear-gradient(#6a6a6a, #3f3f3f 45%, #777); }
.pointHead { display: flex; justify-content: space-between; align-items: center; height: 22px; padding: 1px 5px 0 6px; color: #000; }
.pointHead button { width: 16px; height: 15px; border: 1px solid #ccc; background: #555; color: #fff; font: 700 11px/11px "Liberation Sans", sans-serif; }
.pointBody { margin: 0 3px; padding: 2px; height: 23px; border: 1px solid #ddd; background: #3f3f3f; }
.pointBody button { width: 100%; height: 23px; background: #f0f0f0; border: 1px solid #fff; box-shadow: inset -2px -2px 0 #c4c4c4; font-size: 11px; }

.palette { position: absolute; left: -2px; top: 281px; width: 170px; height: 202px; border: 1px solid #8f979c; border-left: 0; border-radius: 0 5px 5px 0; background: linear-gradient(#4a4e52, #33363a 30px, #5b6266 60px, #23272a); box-sizing: content-box; }
.palHead { display: flex; justify-content: flex-end; height: 27px; padding-right: 3px; }
.palHead button { width: 49px; height: 19px; border: 1px solid #9aa0a5; border-top: 0; border-radius: 0 0 4px 4px; color: #fff; font: 700 15px/15px "Liberation Sans", sans-serif; }
.palBody { display: grid; grid-template-columns: repeat(6, 25px); grid-auto-rows: 25px; width: 150px; height: 150px; margin-left: 4px; padding: 6px 6px 12px 4px; background: #f0f0f0; border: 1px solid #b8bcc0; }
.palBody button { display: flex; align-items: center; justify-content: center; }
.swatch { width: 13px; height: 13px; border: 1px solid #bbb; background: #0f0; }

.sheets { display: flex; align-items: flex-end; height: 26px; padding-left: 30px; background: #4c4c4c; }
.sheet { width: 60px; height: 23px; background: #e2e2e2; }
.add { width: 26px; height: 23px; color: #c4c4c4; font-size: 20px; line-height: 22px; }
.forum { display: flex; align-items: center; gap: 4px; height: 24px; margin-left: auto; padding: 0 10px 0 25px; background: #2f6392; color: #fff; clip-path: polygon(20px 0, 100% 0, 100% 100%, 0 100%); }
.forum svg { width: 11px; height: 12px; }

.status { display: flex; align-items: center; height: 25px; padding: 0 11px 0 9px; background: #e6e6e6; white-space: nowrap; }
.brand { display: flex; width: 95px; font: 700 12px/16px "Open Sans", sans-serif; }
.brand b { color: #2d62a8; }
.brand i { color: #f08a1c; font-size: 15px; font-style: normal; }
.brand em { color: #f08a1c; font-style: normal; }
.quote b { margin-left: 6px; font: 700 12px/16px "Liberation Mono", monospace; }
.q1 { width: 157px; }
.q2 { width: 167px; }
.red { color: #c01820; }
.notice { margin: 0 91px 0 auto; color: #16168c; }
.acct { width: 45px; height: 17px; margin-right: 3px; border: 1px solid #555; background: #7d7d7d; color: #fff; line-height: 15px; }
.slash { width: 8px; height: 14px; margin: 0 9px 0 5px; }
.chip { width: 16px; height: 15px; margin-right: 7px; }
.signal { width: 16px; height: 15px; margin-right: 7px; }
.time { font-family: "DejaVu Sans Condensed", sans-serif; }

.taskbar { display: flex; height: 39px; border-top: 1px solid #1c4f58; background: linear-gradient(90deg, #1c6470 0, #23808c 12%, #278d98 30%, #2a8f9c 60%, #258592 70%, #1b626e 74%, #1a5965 100%); color: #fff; white-space: nowrap; }
.pin { display: flex; align-items: center; justify-content: center; width: 63px; }
.pin svg { width: 32px; height: 32px; }
.orb { width: 53px; }
.orb svg { width: 40px; height: 39px; }
.tasks { display: flex; gap: 4px; margin-left: 2px; }
.task { display: flex; align-items: center; justify-content: center; width: 58px; border: 1px solid #10333a; border-radius: 3px; background: linear-gradient(135deg, #8fc4ca, #4a98a2 50%, #3b8d98); box-shadow: inset 0 0 0 1px #a5d0d5; }
.task.on { background: linear-gradient(135deg, #e4f2f3, #9fcdd2); }
.task svg { width: 32px; height: 32px; }
.tray { display: flex; align-items: center; margin-left: auto; }
.kbd { width: 36px; height: 22px; margin-right: 16px; }
.temp, .clock { display: flex; flex-direction: column; align-items: center; line-height: 17px; }
.temp { width: 58px; margin-right: 17px; }
.trayIcons { display: flex; gap: 8px; }
.trayIcons svg { width: 16px; height: 16px; }
.clock { width: 94px; margin: 0 21px 0 18px; }
.note { width: 20px; height: 20px; margin-right: 10px; }
.peek { width: 14px; height: 38px; border-left: 1px solid #8fb8be; background: linear-gradient(90deg, #3c7f8a, #1d5661); }

.cursor { position: absolute; z-index: 5; width: 12px; height: 19px; fill: #fff; stroke: #222; }
.c1 { left: 649px; top: 530px; }
.c2 { left: 522px; bottom: 0; }
</style>
